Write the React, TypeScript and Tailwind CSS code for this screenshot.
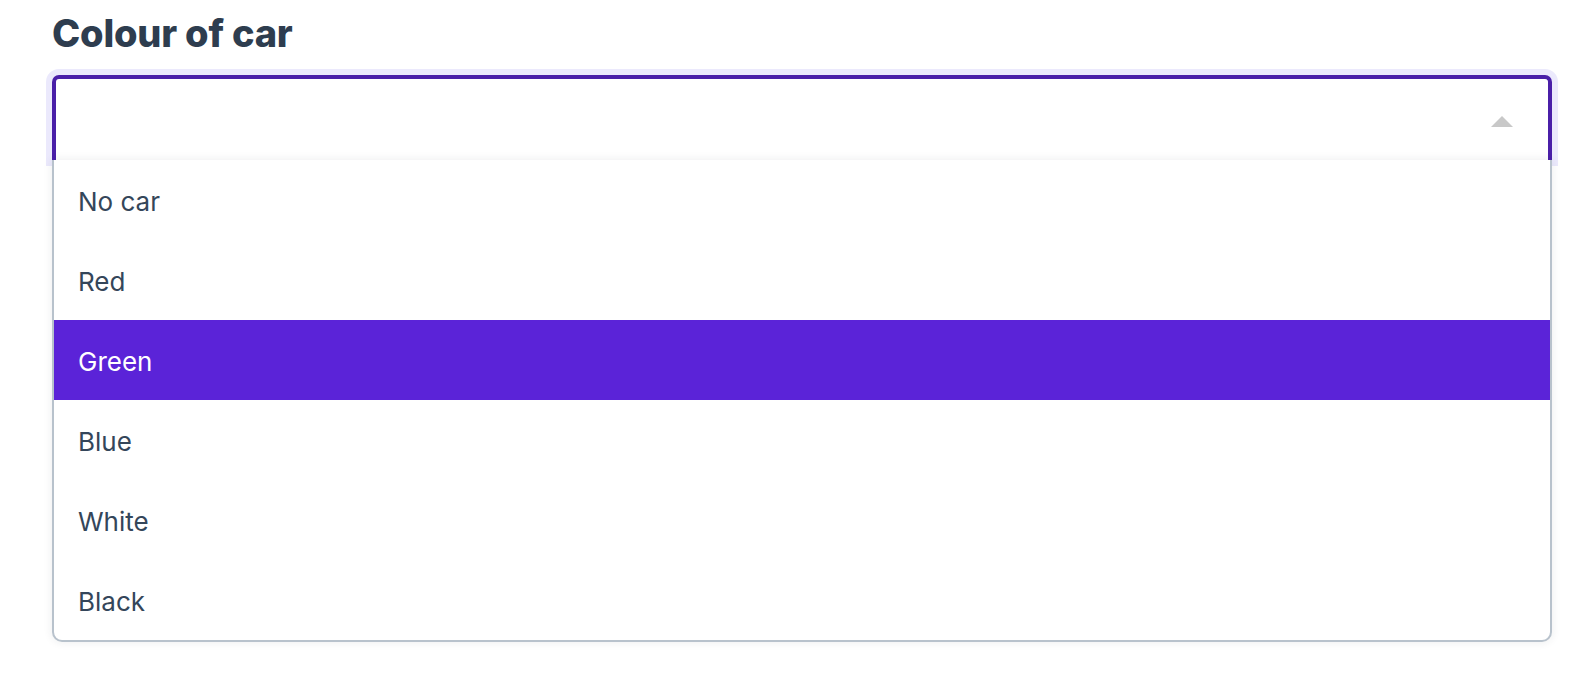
const options = ["No car", "Red", "Green", "Blue", "White", "Black"];

export default function App() {
  const selected = "Green";

  return (
    <div
      className="min-h-screen bg-white pt-[14px] pl-[52px]"
      style={{ fontFamily: 'Inter, "Noto Sans", sans-serif' }}
    >
      <h2 className="text-[38px] leading-none h-[38px] font-extrabold text-[#2e3d4f] tracking-[-0.2px]">
        Colour of car
      </h2>

      <div className="relative mt-[23px] w-[1500px]">
        {/* Select control, focused; its bottom edge sits under the open menu */}
        <div className="h-[85px] rounded-t-[7px] border-4 border-b-0 border-[#4a1fa8] bg-white ring-[6px] ring-[#ebe9fc] flex items-center justify-end pr-[35px] pt-[4px]">
          <span className="w-0 h-0 border-l-[11px] border-r-[11px] border-b-[11px] border-l-transparent border-r-transparent border-b-[#c8c8c8]" />
        </div>

        {/* Open menu */}
        <ul className="absolute left-0 right-0 top-[85px] bg-white border-2 border-t-0 border-[#b8c2cc] rounded-b-[10px] shadow-[0_0_10px_rgba(30,40,60,0.09)] overflow-hidden">
          {options.map((opt) => (
            <li
              key={opt}
              className={
                opt === selected
                  ? "h-[80px] flex items-center pl-[24px] pt-[2px] text-[26px] bg-[#5b23d8] text-white"
                  : "h-[80px] flex items-center pl-[24px] pt-[2px] text-[26px] text-[#34465a]"
              }
            >
              {opt}
            </li>
          ))}
        </ul>
      </div>
    </div>
  );
}
